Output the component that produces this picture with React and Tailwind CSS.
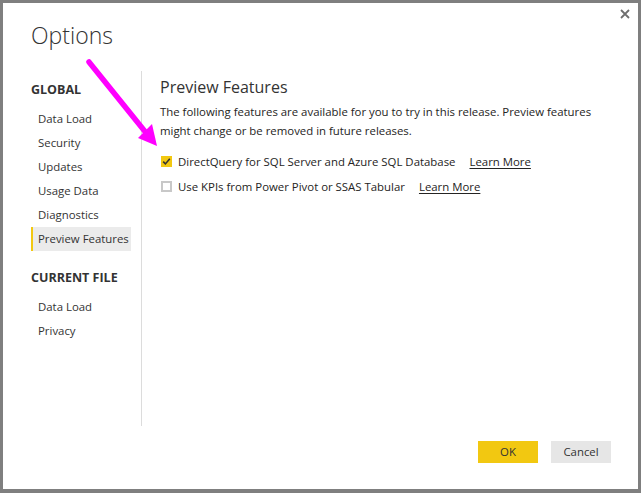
import React from "react";

const font = { fontFamily: '"Open Sans", "Noto Sans", sans-serif' };

const globalItems = ["Data Load", "Security", "Updates", "Usage Data", "Diagnostics", "Preview Features"];
const fileItems = ["Data Load", "Privacy"];

function NavItem({ label, active }) {
  return (
    <div
      className={
        "h-6 w-[100px] flex items-center whitespace-nowrap pl-[5px] border-l-2 text-[11.4px] text-[#333] " +
        (active ? "bg-[#ebebeb] border-[#f2c811]" : "border-transparent")
      }
    >
      {label}
    </div>
  );
}

function Check({ checked }) {
  if (checked) {
    return (
      <span className="w-[11px] h-[11px] bg-[#f2c811] flex items-center justify-center shrink-0">
        <svg width="9" height="9" viewBox="0 0 9 9">
          <path d="M1.2 4.6 L3.4 6.9 L7.8 1.8" fill="none" stroke="#333" strokeWidth="1.6" />
        </svg>
      </span>
    );
  }
  return <span className="w-[11px] h-[11px] border-2 border-[#c8c8c8] bg-white shrink-0" />;
}

function Feature({ checked, label }) {
  return (
    <div className="h-[25px] flex items-center pl-[1px] text-[11.4px] text-[#252423] whitespace-nowrap">
      <Check checked={checked} />
      <span className="ml-[6px]">{label}</span>
      <span className="ml-[14px] underline underline-offset-2">Learn More</span>
    </div>
  );
}

export default function App() {
  return (
    <div
      className="relative w-[641px] h-[493px] bg-white border-[#7f7f7f] border-t-[3px] border-x-[3px] border-b-4 flex flex-col"
      style={font}
    >
      <div className="h-[68px] pl-[28px] pt-[17px]">
        <div className="text-[23px] leading-[30px] font-light text-[#333]">Options</div>
      </div>

      <button className="absolute right-[8px] top-[6px] w-[10px] h-[10px]">
        <svg width="10" height="10" viewBox="0 0 10 10">
          <path d="M1 1 L9 9 M9 1 L1 9" stroke="#6e6e6e" strokeWidth="1.8" />
        </svg>
      </button>

      <div className="flex h-[355px]">
        <div className="w-[139px] border-r border-[#dcdcdc] pl-[28px] pt-[10px]">
          <div className="text-[12.5px] leading-[18px] font-bold text-[#333]">GLOBAL</div>
          <div className="mt-[8px]">
            {globalItems.map((l) => (
              <NavItem key={l} label={l} active={l === "Preview Features"} />
            ))}
          </div>
          <div className="mt-[18px] text-[12.5px] leading-[18px] font-bold text-[#333]">CURRENT FILE</div>
          <div className="mt-[8px]">
            {fileItems.map((l) => (
              <NavItem key={l} label={l} />
            ))}
          </div>
        </div>

        <div className="flex-1 pl-[18px] pt-[4px]">
          <div className="text-[16px] leading-[24px] text-[#333]">Preview Features</div>
          <p className="mt-[3px] text-[11.4px] leading-[19px] text-[#252423] w-[445px]">
            The following features are available for you to try in this release. Preview features might change or be
            removed in future releases.
          </p>
          <div className="mt-[9px]">
            <Feature checked label="DirectQuery for SQL Server and Azure SQL Database" />
            <Feature label="Use KPIs from Power Pivot or SSAS Tabular" />
          </div>
        </div>
      </div>

      <div className="flex justify-end gap-[13px] pr-[27px] pt-[15px]">
        <button className="w-[60px] h-[22px] bg-[#f2c811] text-[11.4px] text-[#333]">OK</button>
        <button className="w-[60px] h-[22px] bg-[#e6e6e6] text-[11.4px] text-[#333]">Cancel</button>
      </div>

      <svg
        className="absolute left-[-3px] top-[-3px] pointer-events-none"
        width="641"
        height="493"
        viewBox="0 0 641 493"
      >
        <path d="M89 62 L147 134" stroke="#ff00ff" strokeWidth="5.5" strokeLinecap="round" />
        <path d="M157 146 L138 138 L152 124 Z" fill="#ff00ff" />
      </svg>
    </div>
  );
}
